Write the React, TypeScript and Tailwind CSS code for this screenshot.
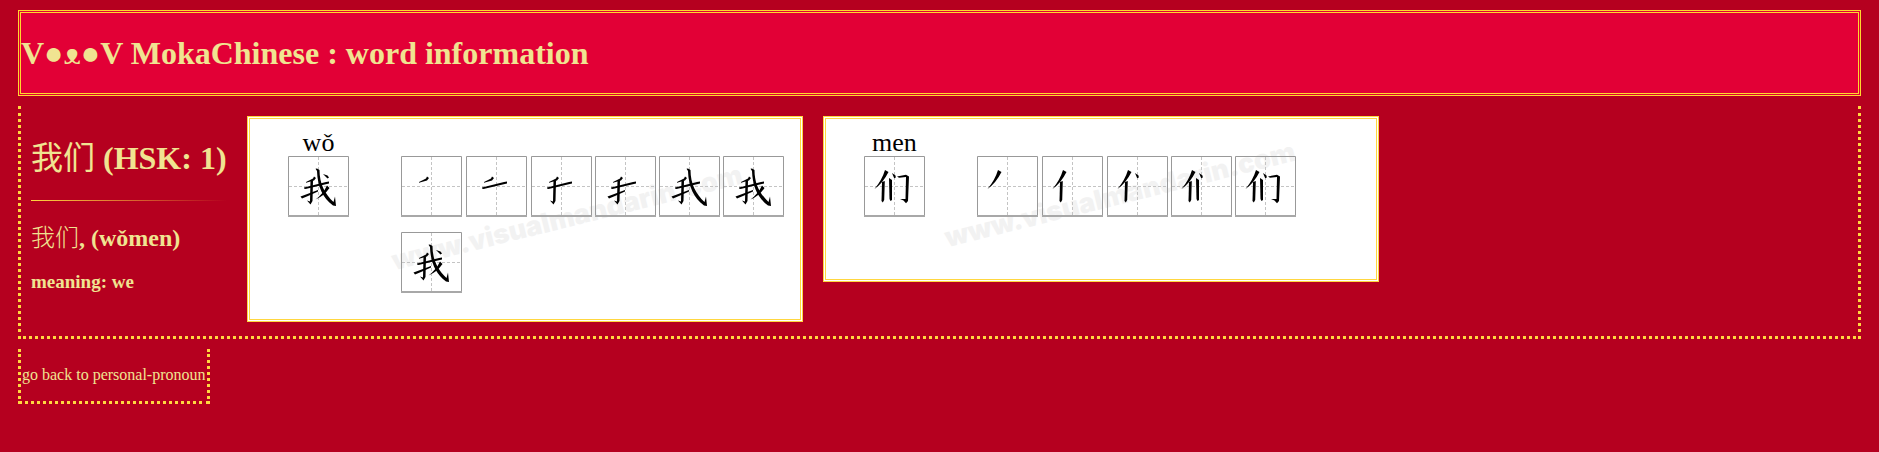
import React from 'react';

const WO = [
  'M18 26 L25 22.500 L26 20.500 L28 22 L26 24.500 L18 26.800 Z',
  'M16 31.500 L38 26 L41 25.500 L41 27.500 L17.500 33 L16 32.500 Z',
  'M22.500 24 L25 24.500 L24.500 45 L22.500 48.500 L19 44.500 L22 45.500 Z',
  'M12.500 40.500 L30 34 L30 35.500 L20 40 L14 42.500 Z',
  'M27.500 12.800 L29 12.500 L31.500 14 C31.500 28 37 38 45.500 46 L47 40.500 L48 50 L45 49.500 C35 42 29.500 31 29 15 Z',
  'M39 29.500 L41.500 32 Q36 40 27.500 43.500 Q35 38 39 29.500 Z',
  'M35 18 L39.500 19.500 L41 21.500 L39.500 22.500 L37.500 20.500 Z',
];
const MEN = [
  'M21 14 L24.500 16 Q19 27 10.500 33 Q18 24 21 14 Z',
  'M18 26 L20.800 25 L20.200 44 L18.800 46.500 L17.500 45 Z',
  'M28 17 L31.500 19.500 L31.800 21.500 L30.200 22.300 Z',
  'M25 22 L28 24 L28 44 L26.500 45 L25.500 43 Z',
  'M33 20.500 L42 18.800 L45 20.500 L44 45 L42 47.200 L39.500 44.500 L36 43 L41.500 43 L42 21 L35 21.800 Z',
];

function Cell({ strokes }: { strokes: string[] }) {
  return (
    <svg viewBox="0 0 61 61" className="h-[61px] w-[61px]" aria-hidden="true">
      <path d="M30.500 1V60M1 30.500H60" stroke="#c4c4c4" strokeDasharray="3 2" fill="none" />
      <path d="M0.500 60V0.500H60.500V60" stroke="#999" fill="none" />
      <path d="M0 60H61" stroke="#a8a8a8" strokeWidth="2" />
      {strokes.map((d) => <path key={d} d={d} fill="#000" />)}
    </svg>
  );
}

function Sheet({ pinyin, strokes, frames, size, mark }: { pinyin: string; strokes: string[]; frames: number[]; size: string; mark: string }) {
  return (
    <figure className={`relative flex w-[556px] shrink-0 overflow-hidden border-[3px] border-double border-[#ffd740] bg-white pl-[38px] text-black ${size}`}>
      <span className={`absolute -rotate-[14deg] whitespace-nowrap font-['Inter',sans-serif] text-[27px] leading-8 font-black text-[#f2f2f2] ${mark}`}>
        www.visualmandarin.com
      </span>
      <figcaption className="relative flex w-[61px] flex-col items-center pt-[11px] font-['Liberation_Serif',serif] text-[26px] leading-[26px]">
        {pinyin}
        <Cell strokes={strokes} />
      </figcaption>
      <div className="relative ml-[52px] grid h-fit grid-cols-[62px_62px_61px_61px_61px_61px] gap-x-[3px] gap-y-[15px] pt-[37px]">
        {frames.map((n) => <Cell key={n} strokes={strokes.slice(0, n)} />)}
      </div>
    </figure>
  );
}

const cjk = "font-['Noto_Sans_CJK_SC',sans-serif]";

export default function App() {
  return (
    <div className="min-h-screen bg-[#b5001f] px-[18px] pt-[10px] pb-12 font-['Liberation_Serif',serif] text-[#f0e491]">
      <header className="border-[3px] border-double border-[#ffd92e] bg-[#e20036] py-[21px]">
        <h1 className="text-[32px] leading-[38px] font-bold">V●ᴥ●V MokaChinese : word information</h1>
      </header>
      <main className="mt-[10px] flex items-start gap-5 border-x-[3px] border-b-[3px] border-dotted border-[#ffd740] px-[10px] pt-[10px] pb-[14px]">
        <section className="w-[196px] shrink-0 pt-4">
          <h1 className="text-[32px] leading-[46px] font-bold whitespace-nowrap"><span className={`${cjk} font-normal`}>我们</span> (HSK: 1)</h1>
          <hr className="mt-[19px] h-px border-0 bg-linear-to-r from-[#ffd740] to-transparent" />
          <h2 className="mt-[18px] text-2xl leading-[34px] font-bold"><span className={`${cjk} font-light`}>我们</span>, (wǒmen)</h2>
          <h3 className="mt-4 text-[19px] leading-[22px] font-bold">meaning: we</h3>
        </section>
        <Sheet pinyin="wǒ" strokes={WO} frames={[1, 2, 3, 4, 5, 6, 7]} size="h-[206px]" mark="top-[83px] left-[137px]" />
        <Sheet pinyin="men" strokes={MEN} frames={[1, 2, 3, 4, 5]} size="h-[166px]" mark="top-[60px] left-[114px]" />
      </main>
      <nav className="mt-[10px] w-fit border-x-[3px] border-b-[3px] border-dotted border-[#ffd740] py-4">
        <a href="#personal-pronoun" className="block px-px text-base leading-5">go back to personal-pronoun</a>
      </nav>
    </div>
  );
}
